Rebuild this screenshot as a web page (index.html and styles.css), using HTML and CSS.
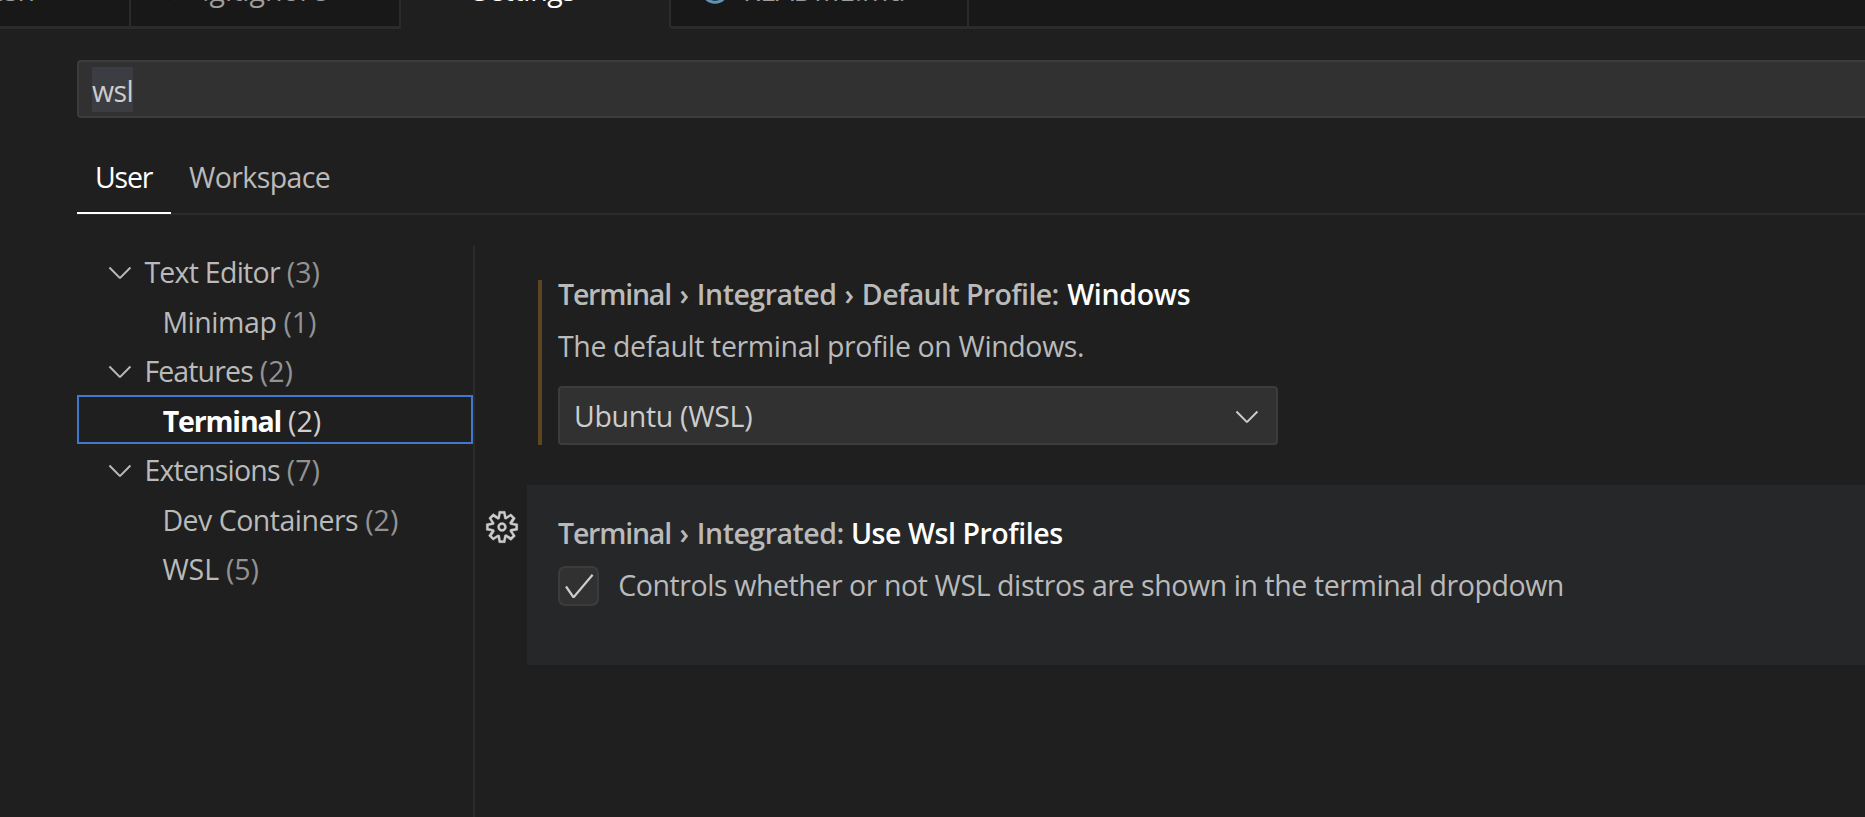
FILE: index.html
```html
<!DOCTYPE html>
<html lang="en">
<head>
<meta charset="utf-8">
<title>Settings</title>
<link rel="stylesheet" href="styles.css">
</head>
<body>
<svg class="defs" width="0" height="0">
  <symbol id="chevron" viewBox="0 0 16 16"><path d="M7.976 10.072l4.357-4.357.62.618L8.284 11h-.618L3 6.333l.619-.618 4.357 4.357z"/></symbol>
  <symbol id="check" viewBox="0 0 16 16"><path d="M14.431 3.323l-8.47 10-.79-.036-3.35-4.77.818-.574 2.978 4.24 8.051-9.506.764.646z"/></symbol>
  <symbol id="gear" viewBox="0 0 16 16"><path fill-rule="evenodd" d="M9.1 4.4L8.6 2H7.4l-.5 2.4-.7.3-2-1.3-.9.8 1.3 2-.2.7-2.4.5v1.2l2.4.5.3.8-1.3 2 .8.8 2-1.3.8.3.4 2.3h1.2l.5-2.4.8-.3 2 1.3.8-.8-1.3-2 .3-.8 2.3-.4V7.4l-2.4-.5-.3-.8 1.3-2-.8-.8-2 1.3-.7-.2zM9.4 1l.5 2.4L12 2.1l2 2-1.4 2.1 2.4.4v2.8l-2.4.5L14 12l-2 2-2.1-1.4-.5 2.4H6.6l-.5-2.4L4 13.9l-2-2 1.4-2.1L1 9.4V6.6l2.4-.5L2.1 4l2-2 2.1 1.4.4-2.4h2.8zm.6 7c0 1.1-.9 2-2 2s-2-.9-2-2 .9-2 2-2 2 .9 2 2zM8 9c.6 0 1-.4 1-1s-.4-1-1-1-1 .4-1 1 .4 1 1 1z"/></symbol>
</svg>

<nav class="tabs">
  <div class="tab tab-script"><span>.sh</span></div>
  <div class="tab tab-ignore">
    <svg class="tab-icon" viewBox="0 0 32 32"><path d="M16 6L26 16 16 26.5 6 16z" fill="#41535b"/></svg>
    <span>.gitignore</span>
  </div>
  <div class="tab tab-settings active"><span>Settings</span></div>
  <div class="tab tab-readme">
    <svg class="tab-icon" viewBox="0 0 32 32"><circle cx="16" cy="16" r="12.3" fill="none" stroke="#5f94b8" stroke-width="3"/><path d="M16 14v8M16 9v2.5" stroke="#5f94b8" stroke-width="3"/></svg>
    <span>README.md</span>
  </div>
  <div class="tab-rest"></div>
</nav>

<main class="settings">
  <div class="search"><span class="selection">wsl</span></div>

  <div class="scopes">
    <div class="scope scope-user current">User</div>
    <div class="scope scope-workspace">Workspace</div>
  </div>

  <div class="body">
    <ul class="tree">
      <li class="row group"><svg class="icon"><use href="#chevron"/></svg><span class="t-editor">Text Editor</span><span class="count">(3)</span></li>
      <li class="row leaf"><span class="t-minimap">Minimap</span><span class="count">(1)</span></li>
      <li class="row group"><svg class="icon"><use href="#chevron"/></svg><span class="t-features">Features</span><span class="count">(2)</span></li>
      <li class="row leaf selected"><span class="t-terminal">Terminal</span><span class="count">(2)</span></li>
      <li class="row group"><svg class="icon"><use href="#chevron"/></svg><span class="t-extensions">Extensions</span><span class="count">(7)</span></li>
      <li class="row leaf"><span class="t-containers">Dev Containers</span><span class="count">(2)</span></li>
      <li class="row leaf"><span class="t-wsl">WSL</span><span class="count">(5)</span></li>
    </ul>

    <div class="list">
      <section class="item modified">
        <h2 class="title"><span class="crumb-terminal">Terminal</span><span class="sep">›</span><span class="crumb-integrated">Integrated</span><span class="sep">›</span><span class="crumb-profile">Default Profile:</span><span class="name">Windows</span></h2>
        <p class="desc">The default terminal profile on Windows.</p>
        <div class="select"><span>Ubuntu (WSL)</span><svg class="icon"><use href="#chevron"/></svg></div>
      </section>

      <div class="focus-row">
        <svg class="icon gear"><use href="#gear"/></svg>
        <section class="item focused">
          <h2 class="title"><span class="crumb-terminal">Terminal</span><span class="sep">›</span><span class="crumb-integrated">Integrated:</span><span class="name name-profiles">Use Wsl Profiles</span></h2>
          <div class="option">
            <div class="checkbox"><svg class="icon"><use href="#check"/></svg></div>
            <p class="desc desc-option">Controls whether or not WSL distros are shown in the terminal dropdown</p>
          </div>
        </section>
      </div>
    </div>
  </div>
</main>
</body>
</html>
```
FILE: styles.css
```css
* { box-sizing: border-box; }

body {
  margin: 0;
  height: 817px;
  overflow: hidden;
  background: #1f1f1f;
  color: #bababa;
  font: 28.5px/40px "Open Sans", "Noto Sans", sans-serif;
  white-space: nowrap;
}

.defs { display: none; }
.icon { width: 36px; height: 36px; flex: none; fill: #bababa; }
h2, p, ul { margin: 0; padding: 0; }

/* Editor tabs, scrolled partly out of view */
.tabs { display: flex; height: 79px; margin-top: -50px; }
.tab {
  display: flex;
  align-items: center;
  padding-top: 3px;
  background: #181818;
  color: #9d9d9d;
  border-right: 2px solid #2b2b2b;
  border-bottom: 3px solid #2b2b2b;
}
.tab-script { width: 131px; }
.tab-script span { margin-left: -3px; letter-spacing: -.3px; }
.tab-ignore { width: 270px; padding-left: 28px; }
.tab-ignore span { margin-left: 11px; }
.tab-settings { width: 270px; padding-left: 72px; letter-spacing: -.4px; }
.tab-readme { width: 298px; padding-left: 28px; letter-spacing: -.3px; }
.tab-readme span { margin-left: 12px; }
.tab-icon { width: 32px; height: 32px; flex: none; }
.tab.active { background: #1f1f1f; color: #fff; border-bottom-color: #1f1f1f; }
.tab-rest { flex: 1; background: #181818; border-bottom: 3px solid #2b2b2b; }

.settings { padding: 31px 0 0 77px; }

.search {
  display: flex;
  align-items: center;
  height: 58px;
  padding-left: 13px;
  border: 2px solid #3c3c3c;
  border-right: 0;
  border-radius: 4px 0 0 4px;
  background: #313131;
  color: #ccc;
  letter-spacing: -.6px;
}
.selection {
  height: 45px;
  margin-top: 1px;
  background: #3c3d42;
  line-height: 48px;
}

.scopes {
  display: flex;
  height: 75px;
  margin-top: 22px;
  align-items: flex-start;
  background: linear-gradient(#2b2b2b, #2b2b2b) 0 73px / 100% 2px no-repeat;
}
.scope { height: 74px; padding: 17px 18px 0; }
.scope-user { width: 94px; letter-spacing: -1.2px; }
.scope-workspace { letter-spacing: -.6px; }
.current { color: #fff; border-bottom: 2px solid #fff; }

.body { display: flex; margin-top: 31px; height: 571px; }

.tree {
  width: 398px;
  padding-top: .5px;
  border-right: 2px solid #2b2b2b;
  list-style: none;
}
.row {
  display: flex;
  align-items: center;
  height: 49.5px;
  padding-top: 1.5px;
}
.row .icon { margin-right: 6.4px; }
.group { padding-left: 25px; }
.leaf { padding-left: 85.4px; }
.count { margin-left: 7px; color: #929292; }
.selected {
  height: 49px;
  margin-bottom: .5px;
  padding: 3px 0 0 83.7px;
  border: 2px solid #4078ce;
  color: #fff;
  font-weight: 700;
}
.selected .count { color: #d0d0d0; font-weight: 400; }
.t-editor { letter-spacing: -.74px; }
.t-minimap { letter-spacing: -.45px; }
.t-features { letter-spacing: -.87px; }
.t-terminal { letter-spacing: -1.15px; }
.t-extensions { letter-spacing: -.8px; }
.t-containers { letter-spacing: -.5px; }
.t-wsl { letter-spacing: -.1px; }

.list { flex: 1; min-width: 0; padding-top: 34px; }

.modified {
  height: 165px;
  margin-left: 63px;
  padding-left: 16px;
  border-left: 4px solid #5e4521;
}
.title { display: flex; height: 40px; font-size: 28.5px; font-weight: 600; line-height: 29px; }
.crumb-terminal { width: 113.5px; letter-spacing: -1.2px; }
.crumb-integrated { letter-spacing: -.48px; }
.crumb-profile { letter-spacing: -.6px; }
.sep { width: 25.3px; text-align: center; }
.name { margin-left: 8.4px; color: #fff; letter-spacing: -.3px; }
.name-profiles { margin-left: 7px; letter-spacing: -.44px; }
.desc { letter-spacing: -.38px; }
.modified .desc { height: 66px; line-height: 52px; }
.select {
  display: flex;
  align-items: center;
  justify-content: space-between;
  width: 720px;
  height: 59px;
  padding: 0 11px 0 14px;
  border: 2px solid #3c3c3c;
  border-radius: 4px;
  background: #313131;
  color: #ccc;
  letter-spacing: -.3px;
}
.select .icon { fill: #ccc; }

.focus-row { display: flex; margin-top: 40px; padding-left: 9px; }
.gear { margin: 24px 7px 0 0; fill: #ccc; stroke: #ccc; stroke-width: .15; }
.focused {
  flex: 1;
  height: 180px;
  padding: 34px 0 0 31px;
  background: #262729;
}
.option { display: flex; align-items: center; margin-top: 7px; }
.checkbox {
  width: 41px;
  height: 40px;
  border: 2px solid #3c3c3c;
  border-radius: 7px;
  background: #313131;
}
.checkbox .icon { display: block; margin-left: .5px; fill: #ccc; }
.desc-option { margin: -2px 0 0 19.3px; letter-spacing: -.42px; }
```
